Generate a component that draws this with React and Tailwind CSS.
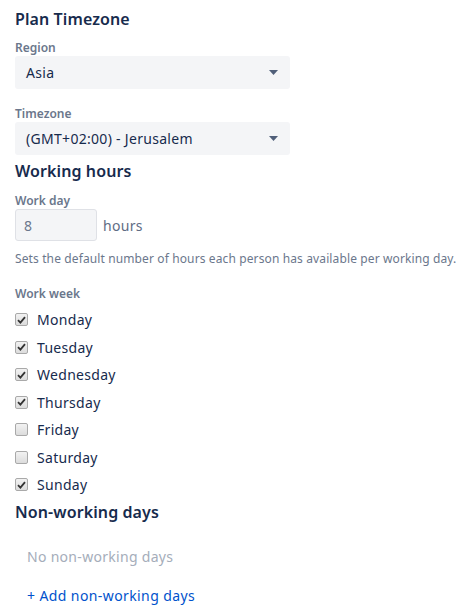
import React, { useState } from "react";

const DAYS = [
  { name: "Monday", on: true },
  { name: "Tuesday", on: true },
  { name: "Wednesday", on: true },
  { name: "Thursday", on: true },
  { name: "Friday", on: false },
  { name: "Saturday", on: false },
  { name: "Sunday", on: true },
];

function Caret() {
  return (
    <svg width="9" height="5" viewBox="0 0 9 5" className="shrink-0">
      <path d="M0 0h9L4.5 5z" fill="#505f79" />
    </svg>
  );
}

function SelectBox({ value }) {
  return (
    <div className="flex items-center justify-between w-[275px] h-[33px] bg-[#f4f5f7] rounded-[3px] pl-[11px] pr-[12px] text-[14px] tracking-[0.3px] text-[#172b4d]">
      <span>{value}</span>
      <Caret />
    </div>
  );
}

function Check({ on }) {
  return (
    <span className="flex items-center justify-center w-[13px] h-[13px] rounded-[2px] border border-[#a9a9a9] bg-gradient-to-b from-[#f2f2f2] to-[#dcdcdc] shrink-0">
      {on && (
        <svg width="9" height="8" viewBox="0 0 9 8">
          <path d="M1 4.2L3.4 6.6 8 1.2" fill="none" stroke="#333" strokeWidth="1.8" />
        </svg>
      )}
    </span>
  );
}

export default function App() {
  const [days, setDays] = useState(DAYS);

  const toggle = (i) =>
    setDays((d) => d.map((x, j) => (j === i ? { ...x, on: !x.on } : x)));

  return (
    <div className="w-[468px] h-[611px] bg-white px-[15px] pt-[9px] font-['Noto_Sans',sans-serif] overflow-hidden">
      <h2 className="text-[16px] leading-[20px] font-semibold tracking-[0.1px] text-[#172b4d]">Plan Timezone</h2>

      <div className="mt-[11px] text-[12px] leading-[16px] font-semibold text-[#6b778c]">Region</div>
      <SelectBox value="Asia" />

      <div className="mt-[17px] text-[12px] leading-[16px] font-semibold text-[#6b778c]">Timezone</div>
      <SelectBox value="(GMT+02:00) - Jerusalem" />

      <h2 className="mt-[6px] text-[16px] leading-[20px] font-semibold tracking-[0.1px] text-[#172b4d]">Working hours</h2>

      <div className="mt-[12px] text-[12px] leading-[16px] font-semibold text-[#6b778c]">Work day</div>
      <div className="flex items-center gap-[6px]">
        <div className="flex items-center w-[82px] h-[32px] bg-[#f4f5f7] border border-[#dfe1e6] rounded-[3px] pl-[8px] text-[14px] text-[#6b778c]">
          8
        </div>
        <span className="text-[14px] tracking-[0.3px] text-[#5e6c84]">hours</span>
      </div>

      <p className="mt-[10px] text-[12px] leading-[16px] tracking-[0.12px] whitespace-nowrap text-[#6b778c]">
        Sets the default number of hours each person has available per working day.
      </p>

      <div className="mt-[19px] text-[12px] leading-[16px] font-semibold text-[#6b778c]">Work week</div>
      <div className="mt-[4px]">
        {days.map((d, i) => (
          <label
            key={d.name}
            onClick={() => toggle(i)}
            className="flex items-center gap-[9px] h-[27.5px] text-[14px] tracking-[0.3px] text-[#172b4d] cursor-pointer"
          >
            <Check on={d.on} />
            <span>{d.name}</span>
          </label>
        ))}
      </div>

      <h2 className="mt-[3px] text-[16px] leading-[20px] font-semibold tracking-[0.1px] text-[#172b4d]">Non-working days</h2>

      <div className="pl-[12px]">
        <div className="mt-[25px] text-[14px] leading-[20px] tracking-[0.3px] text-[#a5adba]">No non-working days</div>
        <button className="mt-[19px] text-[14px] leading-[20px] tracking-[0.4px] text-[#0052cc]">+ Add non-working days</button>
      </div>
    </div>
  );
}
